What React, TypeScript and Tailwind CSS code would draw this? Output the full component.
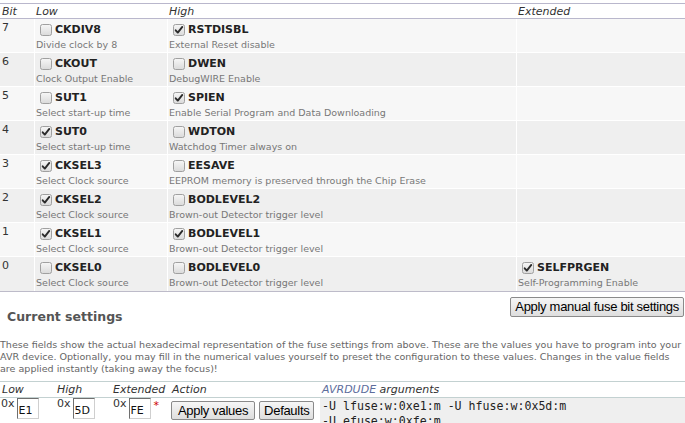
import React from "react";

type Fuse = { name: string; desc: string; checked: boolean } | null;

const rows: { bit: number; low: Fuse; high: Fuse; ext: Fuse }[] = [
  { bit: 7, low: { name: "CKDIV8", desc: "Divide clock by 8", checked: false }, high: { name: "RSTDISBL", desc: "External Reset disable", checked: true }, ext: null },
  { bit: 6, low: { name: "CKOUT", desc: "Clock Output Enable", checked: false }, high: { name: "DWEN", desc: "DebugWIRE Enable", checked: false }, ext: null },
  { bit: 5, low: { name: "SUT1", desc: "Select start-up time", checked: false }, high: { name: "SPIEN", desc: "Enable Serial Program and Data Downloading", checked: true }, ext: null },
  { bit: 4, low: { name: "SUT0", desc: "Select start-up time", checked: true }, high: { name: "WDTON", desc: "Watchdog Timer always on", checked: false }, ext: null },
  { bit: 3, low: { name: "CKSEL3", desc: "Select Clock source", checked: true }, high: { name: "EESAVE", desc: "EEPROM memory is preserved through the Chip Erase", checked: false }, ext: null },
  { bit: 2, low: { name: "CKSEL2", desc: "Select Clock source", checked: true }, high: { name: "BODLEVEL2", desc: "Brown-out Detector trigger level", checked: false }, ext: null },
  { bit: 1, low: { name: "CKSEL1", desc: "Select Clock source", checked: true }, high: { name: "BODLEVEL1", desc: "Brown-out Detector trigger level", checked: true }, ext: null },
  { bit: 0, low: { name: "CKSEL0", desc: "Select Clock source", checked: false }, high: { name: "BODLEVEL0", desc: "Brown-out Detector trigger level", checked: false }, ext: { name: "SELFPRGEN", desc: "Self-Programming Enable", checked: true } },
];

function Box({ checked }: { checked: boolean }) {
  return (
    <svg width="12" height="12" viewBox="0 0 12 12" className="ml-[4px] mr-[3px] shrink-0">
      <defs>
        <linearGradient id="cbg" x1="0" y1="0" x2="0" y2="1">
          <stop offset="0" stopColor="#f7f7f7" />
          <stop offset="1" stopColor="#dadada" />
        </linearGradient>
      </defs>
      <rect x="0.5" y="0.5" width="11" height="11" rx="2" fill="url(#cbg)" stroke="#a0a0a0" />
      {checked && (
        <path d="M2.7 6.3 L4.8 8.6 L9.3 2.9" fill="none" stroke="#2b2b2b" strokeWidth="1.9" strokeLinecap="round" strokeLinejoin="round" />
      )}
    </svg>
  );
}

function Cell({ f, bg }: { f: Fuse; bg: string }) {
  return (
    <div className={`${bg} pl-px pt-[4px]`}>
      {f && (
        <>
          <div className="flex items-center h-[13px]">
            <Box checked={f.checked} />
            <span className="font-bold text-[11px] leading-[13px] text-[#222] whitespace-nowrap">{f.name}</span>
          </div>
          <div className="mt-[3px] text-[9.5px] leading-[11px] text-[#777] whitespace-nowrap">{f.desc}</div>
        </>
      )}
    </div>
  );
}

function Btn({ children, className = "" }: { children: React.ReactNode; className?: string }) {
  return (
    <button
      className={`h-[19px] border border-[#8a8a8a] rounded-[2px] bg-gradient-to-b from-[#f6f6f6] to-[#dedede] font-['Liberation_Sans',Arial,sans-serif] text-[13px] leading-[16px] tracking-[-0.3px] text-black whitespace-nowrap ${className}`}
    >
      {children}
    </button>
  );
}

function Hex({ value, star = false }: { value: string; star?: boolean }) {
  return (
    <div className="flex items-start pl-px">
      <span className="text-[11px] leading-[11px] text-[#333]">0x</span>
      <input
        readOnly
        value={value}
        className="ml-[2px] w-[22px] h-[21px] border border-t-[#6f6f6f] border-l-[#6f6f6f] border-b-[#cfcfcf] border-r-[#cfcfcf] bg-white pl-px pt-[3px] text-[11px] text-[#111] outline-none font-['DejaVu_Sans',sans-serif]"
      />
      {star && <span className="ml-[3px] mt-[2px] text-[11px] leading-[11px] text-[#cc0000]">*</span>}
    </div>
  );
}

export default function App() {
  return (
    <div className="w-[685px] h-[423px] overflow-hidden bg-white font-['DejaVu_Sans',Verdana,sans-serif] text-[#333]">
      <div className="mt-[3px] border-t border-[#b9b7cc]">
        <div className="grid grid-cols-[34px_132px_348px_168px] gap-x-px h-[15px] border-b border-[#b9b7cc] italic text-[11px] leading-[15px] text-[#333]">
          <div className="pl-[2px]">Bit</div>
          <div className="pl-px">Low</div>
          <div className="pl-px">High</div>
          <div className="pl-px">Extended</div>
        </div>
        <div className="grid grid-cols-[34px_132px_348px_168px] gap-px bg-white border-b border-[#bdbbc9]">
          {rows.map((r, i) => {
            const bg = i % 2 === 0 ? "bg-[#f7f7f7]" : "bg-[#efefef]";
            const h = i === rows.length - 1 ? "h-[34px]" : "h-[33px]";
            return (
              <React.Fragment key={r.bit}>
                <div className={`${bg} ${h} pl-[2px] pt-[2px] text-[11px] leading-[13px] text-[#333]`}>{r.bit}</div>
                <Cell f={r.low} bg={bg} />
                <Cell f={r.high} bg={bg} />
                <Cell f={r.ext} bg={bg} />
              </React.Fragment>
            );
          })}
        </div>
      </div>

      <div className="flex justify-between items-start">
        <h3 className="pt-[17px] pl-[7px] font-bold text-[12.5px] leading-[15px] text-[#555]">Current settings</h3>
        <Btn className="mt-[5px] mr-px px-[4px] h-[20px]">Apply manual fuse bit settings</Btn>
      </div>

      <p className="mt-[15px] text-[9.55px] leading-[12px] text-[#666] whitespace-nowrap">
        These fields show the actual hexadecimal representation of the fuse settings from above. These are the values you have to program into your
        <br />
        AVR device. Optionally, you may fill in the numerical values yourself to preset the configuration to these values. Changes in the value fields
        <br />
        are applied instantly (taking away the focus)!
      </p>

      <div className="mt-[6px] border-t border-[#c3d1d1]">
        <div className="grid grid-cols-[56px_56px_58px_150px_365px] h-[16px] border-b border-[#c3d1d1] italic text-[11px] leading-[15px] text-[#333]">
          <div className="pl-[2px]">Low</div>
          <div className="pl-px">High</div>
          <div className="pl-px">Extended</div>
          <div className="pl-[2px]">Action</div>
          <div className="pl-[2px]">
            <span className="text-[#5d6d9c]">AVRDUDE</span> arguments
          </div>
        </div>
        <div className="grid grid-cols-[56px_56px_58px_150px_365px] h-[40px]">
          <Hex value="E1" />
          <Hex value="5D" />
          <Hex value="FE" star />
          <div className="flex items-start pl-px pt-[3px] gap-[4px]">
            <Btn className="px-[6px]">Apply values</Btn>
            <Btn className="px-[4px]">Defaults</Btn>
          </div>
          <div className="bg-[#efefef] pl-[2px] pt-px font-['DejaVu_Sans_Mono',monospace] text-[11.6px] leading-[15px] text-[#222] whitespace-pre">
            {"-U lfuse:w:0xe1:m -U hfuse:w:0x5d:m\n-U efuse:w:0xfe:m"}
          </div>
        </div>
      </div>
    </div>
  );
}
